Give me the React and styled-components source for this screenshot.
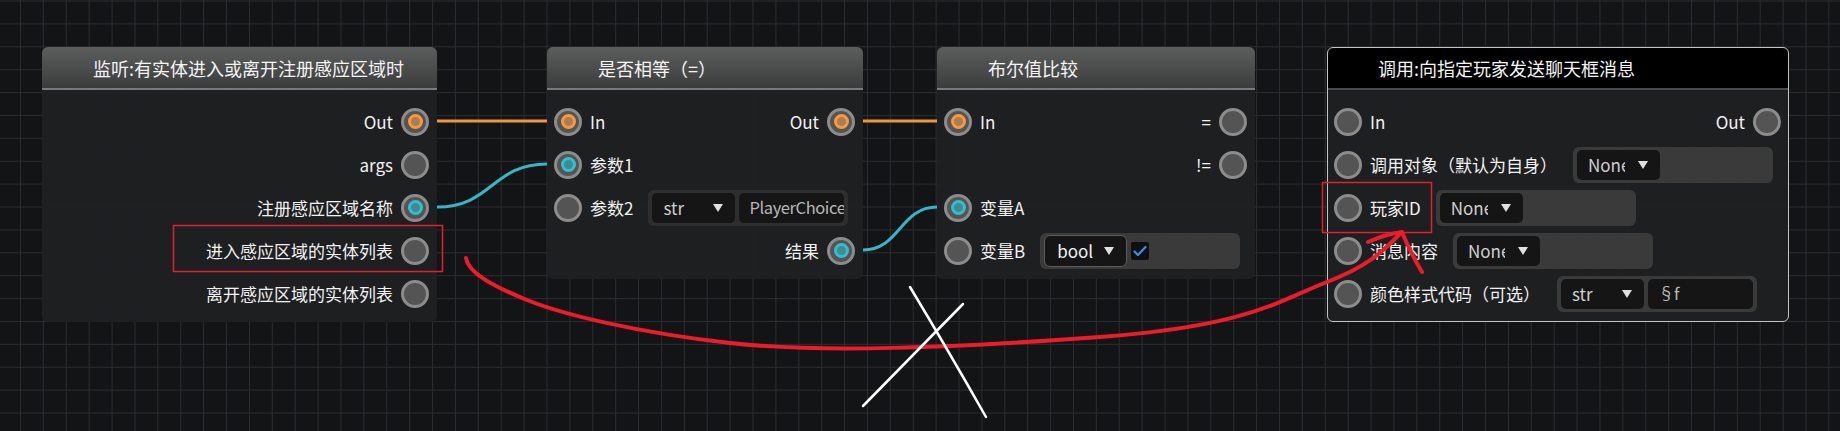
import React from 'react';
import styled, { createGlobalStyle } from 'styled-components';

const GlobalStyle = createGlobalStyle`
  html, body {
    margin: 0;
    padding: 0;
    background: #131416;
  }
  body {
    font-family: 'Noto Sans CJK SC', 'Noto Sans', sans-serif;
  }
`;

const Canvas = styled.div`
  position: relative;
  width: 1840px;
  height: 431px;
  overflow: hidden;
  background-color: #131416;
  background-image:
    linear-gradient(to right, #2b2c2f 1px, transparent 1px),
    linear-gradient(to bottom, #2b2c2f 1px, transparent 1px);
  background-size: 22.9px 22.9px;
  background-position: 20px 0.5px;
`;

const Layer = styled.svg`
  position: absolute;
  left: 0;
  top: 0;
  width: 1840px;
  height: 431px;
  pointer-events: none;
  z-index: ${props => props.$z};
`;

const NodeBox = styled.div`
  position: absolute;
  left: ${props => props.$x}px;
  top: ${props => props.$y}px;
  width: ${props => props.$w}px;
  z-index: 1;
  display: flex;
  flex-direction: column;
  border-radius: 6px;
  background: rgba(31, 32, 34, 0.94);
  outline: ${props => (props.$selected ? '1.5px solid #c4c4c4' : 'none')};
  outline-offset: -1.5px;
  overflow: hidden;
`;

const Header = styled.div`
  height: 41px;
  display: flex;
  align-items: center;
  padding-left: 51px;
  border-bottom: 2px solid ${props => (props.$dark ? '#4a4a4a' : '#7a7a7a')};
  background: ${props =>
    props.$dark ? '#000' : 'linear-gradient(to bottom, #5c5d5d, #3b3c3c)'};
  color: #f4f4f4;
  font-size: 18px;
  line-height: 1;
  white-space: nowrap;
`;

const Body = styled.div`
  display: flex;
  flex-direction: column;
  padding: 10px 8px 7px 7px;
`;

const Row = styled.div`
  height: 43px;
  display: flex;
  align-items: center;
  justify-content: ${props => props.$justify || 'flex-start'};
`;

const Port = styled.div`
  display: flex;
  align-items: center;
  gap: 8px;
`;

const Socket = styled.div`
  width: 28px;
  height: 28px;
  box-sizing: border-box;
  border-radius: 50%;
  border: 3px solid #8c8c8c;
  background: #545454;
  display: flex;
  align-items: center;
  justify-content: center;
  flex-shrink: 0;
`;

const Dot = styled.div`
  width: 15px;
  height: 15px;
  box-sizing: border-box;
  border-radius: 50%;
  border: 3px solid ${props => props.$ring};
  background: ${props => props.$core};
`;

const Label = styled.span`
  color: #f2f2f2;
  font-size: 17px;
  line-height: 1;
  white-space: nowrap;
  flex-shrink: 0;
`;

const Field = styled.div`
  width: 200px;
  height: 36px;
  box-sizing: border-box;
  margin-left: ${props => props.$ml || 15}px;
  padding: 4px;
  display: flex;
  align-items: center;
  gap: 4px;
  border-radius: 6px;
  background: ${props => props.$tone || '#3a3a3a'};
  flex-shrink: 0;
`;

const Select = styled.div`
  width: 83px;
  height: ${props => (props.$bordered ? 32 : 30)}px;
  box-sizing: border-box;
  padding: 0 12px 0 ${props => (props.$bordered ? 12 : 11)}px;
  display: flex;
  align-items: center;
  justify-content: space-between;
  border-radius: ${props => (props.$bordered ? 6 : 5)}px;
  border: ${props => (props.$bordered ? '1px solid #5c5c5c' : 'none')};
  background: #151515;
  color: ${props => (props.$bordered ? '#f2f2f2' : '#cfcfcf')};
  font-size: 17px;
  line-height: 1.4;
  flex-shrink: 0;
`;

const SelectText = styled.span`
  display: block;
  flex-shrink: 0;
  white-space: nowrap;
  ${props => props.$clip && `max-width: ${props.$clip}px; overflow: hidden;`}
`;

const Caret = styled.span`
  width: 0;
  height: 0;
  flex-shrink: 0;
  border-left: 5px solid transparent;
  border-right: 5px solid transparent;
  border-top: 8px solid #e0e0e0;
`;

const Input = styled.div`
  flex: 1;
  height: 30px;
  box-sizing: border-box;
  padding-left: 10px;
  display: flex;
  align-items: center;
  border-radius: 5px;
  background: #151515;
  color: #b8b8b8;
  font-size: 16.5px;
  letter-spacing: -0.4px;
  line-height: 1.4;
  white-space: nowrap;
  overflow: hidden;
`;

const Check = styled.div`
  width: 18px;
  height: 18px;
  border-radius: 2px;
  background: #0f0f10;
  display: flex;
  align-items: center;
  justify-content: center;
`;

const orange = { $ring: '#f59a3f', $core: '#b07b4f' };
const cyan = { $ring: '#37bccb', $core: '#3b8c97' };

const Sock = ({ dot }) => <Socket>{dot && <Dot {...dot} />}</Socket>;

const InPort = ({ label, dot }) => (
  <Port>
    <Sock dot={dot} />
    <Label>{label}</Label>
  </Port>
);

const OutPort = ({ label, dot }) => (
  <Port>
    <Label>{label}</Label>
    <Sock dot={dot} />
  </Port>
);

const Dropdown = ({ value, clip, bordered }) => (
  <Select $bordered={bordered}>
    <SelectText $clip={clip}>{value}</SelectText>
    <Caret />
  </Select>
);

const ListenNode = () => (
  <NodeBox $x={42} $y={47} $w={395}>
    <Header>监听:有实体进入或离开注册感应区域时</Header>
    <Body>
      <Row $justify="flex-end"><OutPort label="Out" dot={orange} /></Row>
      <Row $justify="flex-end"><OutPort label="args" /></Row>
      <Row $justify="flex-end"><OutPort label="注册感应区域名称" dot={cyan} /></Row>
      <Row $justify="flex-end"><OutPort label="进入感应区域的实体列表" /></Row>
      <Row $justify="flex-end"><OutPort label="离开感应区域的实体列表" /></Row>
    </Body>
  </NodeBox>
);

const EqualNode = () => (
  <NodeBox $x={547} $y={47} $w={316}>
    <Header>是否相等（=）</Header>
    <Body>
      <Row $justify="space-between">
        <InPort label="In" dot={orange} />
        <OutPort label="Out" dot={orange} />
      </Row>
      <Row><InPort label="参数1" dot={cyan} /></Row>
      <Row>
        <InPort label="参数2" />
        <Field $tone="#2e2e2e">
          <Dropdown value="str" />
          <Input>PlayerChoice</Input>
        </Field>
      </Row>
      <Row $justify="flex-end"><OutPort label="结果" dot={cyan} /></Row>
    </Body>
  </NodeBox>
);

const BoolNode = () => (
  <NodeBox $x={937} $y={47} $w={318}>
    <Header>布尔值比较</Header>
    <Body>
      <Row $justify="space-between">
        <InPort label="In" dot={orange} />
        <OutPort label="=" />
      </Row>
      <Row $justify="flex-end"><OutPort label="!=" /></Row>
      <Row><InPort label="变量A" dot={cyan} /></Row>
      <Row>
        <InPort label="变量B" />
        <Field>
          <Dropdown value="bool" bordered />
          <Check>
            <svg width="14" height="12" viewBox="0 0 14 12">
              <path d="M1.5 6.5 L5 10 L12.5 2" fill="none" stroke="#3a8cf2" strokeWidth="2.2" strokeLinecap="round" strokeLinejoin="round" />
            </svg>
          </Check>
        </Field>
      </Row>
    </Body>
  </NodeBox>
);

const ChatNode = () => (
  <NodeBox $x={1327} $y={47} $w={462} $selected>
    <Header $dark>调用:向指定玩家发送聊天框消息</Header>
    <Body>
      <Row $justify="space-between">
        <InPort label="In" />
        <OutPort label="Out" />
      </Row>
      <Row>
        <InPort label="调用对象（默认为自身）" />
        <Field $ml={16}>
          <Dropdown value="None" clip={37} />
        </Field>
      </Row>
      <Row>
        <InPort label="玩家ID" />
        <Field>
          <Dropdown value="None" clip={37} />
        </Field>
      </Row>
      <Row>
        <InPort label="消息内容" />
        <Field>
          <Dropdown value="None" clip={37} />
        </Field>
      </Row>
      <Row>
        <InPort label="颜色样式代码（可选）" />
        <Field $ml={17}>
          <Dropdown value="str" />
          <Input>§f</Input>
        </Field>
      </Row>
    </Body>
  </NodeBox>
);

const Wires = () => (
  <Layer $z={0} viewBox="0 0 1840 431">
    <g fill="none" strokeWidth="3">
      <path d="M437 121 L547 121" stroke="#f0963c" />
      <path d="M863 121 L937 121" stroke="#f0963c" />
      <path d="M437 207 C492 207 492 164 547 164" stroke="#36b5c5" />
      <path d="M863 250 C900 250 900 207 937 207" stroke="#36b5c5" />
    </g>
  </Layer>
);

const Marks = () => (
  <Layer $z={2} viewBox="0 0 1840 431">
    <g fill="none" stroke="#e3202b" strokeWidth="1.5">
      <rect x="173.5" y="225.5" width="269" height="46" />
      <rect x="1322.5" y="182.5" width="109" height="50" />
    </g>
    <g fill="none" stroke="#ec1c2a" strokeWidth="4" strokeLinecap="round" strokeLinejoin="round">
      <path d="M466 258 C468 272 490 285 527 300 S 640 333 730 343 S 950 348 1100 337 S 1280 300 1327 282 S 1385 248 1402 232" />
      <path d="M1368 242 Q1386 234 1402 232 Q1410 252 1422 272" />
    </g>
    <g fill="none" stroke="#ffffff" strokeWidth="2.5" strokeLinecap="round">
      <path d="M910 287 Q948 350 986 417" />
      <path d="M963 304 Q912 356 863 406" />
    </g>
  </Layer>
);

export default function App() {
  return (
    <>
      <GlobalStyle />
      <Canvas>
        <Wires />
        <ListenNode />
        <EqualNode />
        <BoolNode />
        <ChatNode />
        <Marks />
      </Canvas>
    </>
  );
}
